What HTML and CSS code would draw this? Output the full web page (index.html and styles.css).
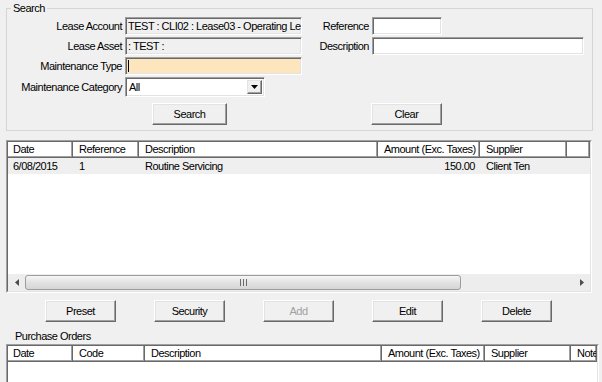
FILE: index.html
```html
<!DOCTYPE html>
<html lang="en">
<head>
    <meta charset="UTF-8">
    <title>Maintenance</title>
    <link rel="stylesheet" href="styles.css">
</head>
<body>

<fieldset class="search">
    <legend>Search</legend>
    <div class="search-grid">
        <label class="lbl">Lease Account</label>
        <div class="txt ro">TEST : CLI02 : Lease03 - Operating Lease</div>
        <label class="lbl">Reference</label>
        <div class="txt ref"></div>

        <label class="lbl">Lease Asset</label>
        <div class="txt ro">: TEST :</div>
        <label class="lbl">Description</label>
        <div class="txt"></div>

        <label class="lbl">Maintenance Type</label>
        <div class="txt req"><span class="caret"></span></div>
        <span></span>
        <span></span>

        <label class="lbl">Maintenance Category</label>
        <div class="combo">
            <span class="combo-val">All</span>
            <span class="drop">
                <svg width="7" height="4" viewBox="0 0 7 4"><path d="M0 0h7L3.5 4z" fill="#000"/></svg>
            </span>
        </div>
    </div>
    <div class="search-btns">
        <button class="btn btn-search">Search</button>
        <button class="btn btn-clear">Clear</button>
    </div>
</fieldset>

<div class="list main-list">
    <div class="list-in">
        <div class="hd cols-main">
            <span>Date</span>
            <span>Reference</span>
            <span>Description</span>
            <span class="num">Amount (Exc. Taxes)</span>
            <span>Supplier</span>
            <span></span>
        </div>
        <div class="row cols-main sel">
            <span>6/08/2015</span>
            <span>1</span>
            <span>Routine Servicing</span>
            <span class="num">150.00</span>
            <span>Client Ten</span>
            <span></span>
        </div>
        <div class="fill"></div>
        <div class="hscroll">
            <span class="arrow">
                <svg width="4" height="7" viewBox="0 0 4 7"><path d="M4 0v7L0 3.5z" fill="#4d4d4d"/></svg>
            </span>
            <div class="track">
                <div class="thumb">
                    <svg width="7" height="7" viewBox="0 0 7 7"><path d="M0.5 0v7M3.5 0v7M6.5 0v7" stroke="#6b6b6b" stroke-width="1"/></svg>
                </div>
            </div>
            <span class="arrow">
                <svg width="4" height="7" viewBox="0 0 4 7"><path d="M0 0v7L4 3.5z" fill="#4d4d4d"/></svg>
            </span>
        </div>
    </div>
</div>

<div class="actions">
    <button class="btn">Preset</button>
    <button class="btn">Security</button>
    <button class="btn" disabled>Add</button>
    <button class="btn">Edit</button>
    <button class="btn">Delete</button>
</div>

<div class="po-title">Purchase Orders</div>
<div class="list po-list">
    <div class="list-in">
        <div class="hd cols-po">
            <span>Date</span>
            <span>Code</span>
            <span>Description</span>
            <span class="num">Amount (Exc. Taxes)</span>
            <span>Supplier</span>
            <span>Note</span>
        </div>
        <div class="fill"></div>
    </div>
</div>

</body>
</html>
```

FILE: styles.css
```css
* {
    box-sizing: border-box;
}
body {
    margin: 0;
    padding-top: 2px;
    width: 602px;
    height: 382px;
    overflow: hidden;
    background-color: #f0f0f0;
    font-family: "Liberation Sans", Arial, sans-serif;
    font-size: 11px;
    letter-spacing: -0.5px;
    color: #000;
}

/* search group box */
.search {
    margin: 0 0 0 6px;
    width: 587px;
    height: 129px;
    padding: 2px 0 0 0;
    border: 1px solid #d5d5d5;
    min-width: 0;
}
.search legend {
    margin-left: 4px;
    padding: 0 2px;
    line-height: 13px;
}
.search-grid {
    display: grid;
    grid-template-columns: 115px 177px 64px 212px;
    grid-template-rows: 18px 18px 18px 20px;
    column-gap: 3px;
    row-gap: 2px;
    align-items: center;
}
.lbl {
    text-align: right;
    white-space: nowrap;
}
.txt {
    height: 18px;
    padding: 1px 2px;
    line-height: 14px;
    white-space: nowrap;
    overflow: hidden;
    background-color: #fff;
    border: 1px solid;
    border-color: #a0a0a0 #fff #fff #a0a0a0;
    box-shadow: inset 1px 1px #696969, inset -1px -1px #e3e3e3;
}
.txt.ro {
    background-color: #f0f0f0;
}
.txt.req {
    background-color: #fde5bd;
}
.txt.ref {
    width: 70px;
}
.caret {
    display: inline-block;
    width: 1px;
    height: 12px;
    margin-top: 1px;
    background-color: #000;
}
.combo {
    width: 140px;
    height: 20px;
    display: flex;
    align-items: center;
    background-color: #fff;
    border: 1px solid;
    border-color: #a0a0a0 #fff #fff #a0a0a0;
    box-shadow: inset 1px 1px #696969, inset -1px -1px #e3e3e3;
    padding: 2px 2px 2px 3px;
}
.combo-val {
    flex: 1;
}
.drop {
    width: 15px;
    height: 14px;
    display: flex;
    justify-content: center;
    align-items: center;
    background-color: #f0f0f0;
    border: 1px solid;
    border-color: #e3e3e3 #696969 #696969 #e3e3e3;
    box-shadow: inset -1px -1px #a0a0a0;
}
.search-btns {
    display: flex;
    gap: 144px;
    padding-left: 145px;
    margin-top: 6px;
}

/* buttons */
.btn {
    height: 22px;
    width: 71px;
    padding: 0;
    font: inherit;
    letter-spacing: inherit;
    color: #000;
    background-color: #f0f0f0;
    border: 1px solid;
    border-color: #fff #696969 #696969 #fff;
    box-shadow: inset -1px -1px #a0a0a0, inset 1px 1px #e3e3e3;
}
.btn:disabled {
    color: #a0a0a0;
}
.btn-search {
    width: 75px;
}

/* list views */
.list {
    margin-left: 6px;
    border: 1px solid;
    border-color: #a0a0a0 #fff #fff #a0a0a0;
    background-color: #fff;
}
.list-in {
    height: 100%;
    display: flex;
    flex-direction: column;
    border: 1px solid;
    border-color: #696969 #e3e3e3 #e3e3e3 #696969;
    overflow: hidden;
}
.main-list {
    margin-top: 9px;
    width: 586px;
    height: 153px;
}
.cols-main {
    display: grid;
    grid-template-columns: 65px 66px 239px 102px 87px 1fr;
}
.cols-po {
    display: grid;
    grid-template-columns: 65px 72px 237px 103px 86px 1fr;
}
.hd span {
    height: 16px;
    line-height: 14px;
    padding: 0 6px;
    white-space: nowrap;
    overflow: hidden;
    border-right: 1px solid #696969;
    border-bottom: 1px solid #696969;
    box-shadow: inset -1px -1px #a0a0a0;
}
.row span {
    height: 16px;
    line-height: 16px;
    padding: 0 6px;
    white-space: nowrap;
}
.hd span:first-child,
.row span:first-child {
    padding-left: 5px;
}
.hd span.num,
.row span.num {
    text-align: right;
    padding-right: 5px;
}
.row.sel {
    background-color: #efefef;
}
.fill {
    flex: 1;
}

/* horizontal scroll bar */
.hscroll {
    height: 17px;
    display: flex;
    background-color: #ededed;
}
.arrow {
    width: 17px;
    display: flex;
    justify-content: center;
    align-items: center;
}
.track {
    flex: 1;
    padding: 1px 112px 1px 0;
}
.thumb {
    height: 100%;
    display: flex;
    justify-content: center;
    align-items: center;
    border: 1px solid #9c9c9c;
    border-radius: 3px;
    background: linear-gradient(#f6f6f6, #e2e2e2 50%, #d6d6d6);
}

.actions {
    display: flex;
    gap: 38px;
    padding-left: 45px;
    margin-top: 7px;
}
.po-title {
    margin-top: 8px;
    padding-left: 15px;
    line-height: 13px;
}
.po-list {
    margin-top: 1px;
    width: 593px;
    height: 41px;
}
```
